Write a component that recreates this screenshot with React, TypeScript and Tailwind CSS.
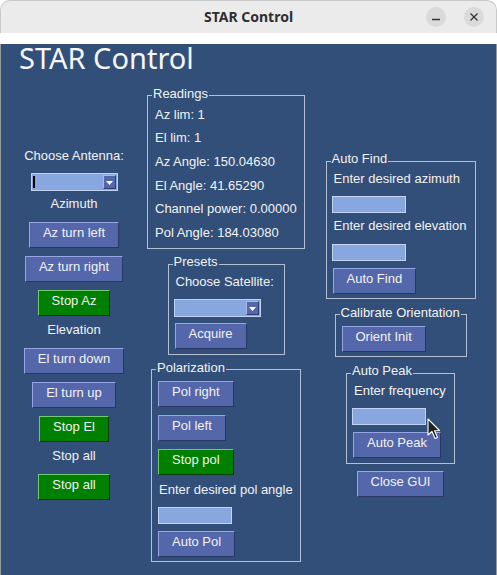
import React from 'react'

const txt = "text-[13px] leading-[16px] text-[#f2f2f2] font-['Liberation_Sans',Arial,sans-serif] whitespace-nowrap"

function Label({ children, className = '' }: { children: React.ReactNode; className?: string }) {
  return <div className={`h-[16px] ${txt} ${className}`}>{children}</div>
}

function Btn({ label, green, className = '' }: { label: string; green?: boolean; className?: string }) {
  const tone = green
    ? 'bg-[#008000] border-t-[#74c874] border-l-[#74c874] border-b-[#003a00] border-r-[#003a00]'
    : 'bg-[#5567ab] border-t-[#97a5e4] border-l-[#97a5e4] border-b-[#2a3664] border-r-[#2a3664]'
  return (
    <button className={`flex h-[26px] shrink-0 items-center border px-[13px] pb-[4px] ${tone} ${txt} ${className}`}>
      {label}
    </button>
  )
}

function Entry({ className = '' }: { className?: string }) {
  return <div className={`h-[17px] w-[74px] border border-[#c2d3f3] bg-[#88a7df] ${className}`} />
}

function Combo({ caret, className = '' }: { caret?: boolean; className?: string }) {
  return (
    <div className={`flex h-[18px] w-[87px] border border-[#bfd0f0] bg-[#88a7df] ${className}`}>
      <div className="flex flex-1">
        {caret && <div className="ml-[1px] mt-[2px] h-[12px] w-[2px] bg-black" />}
      </div>
      <div className="my-[1px] mr-[1px] flex w-[13px] items-center justify-center border border-t-[#aab6ea] border-l-[#aab6ea] border-b-[#2f3d70] border-r-[#2f3d70] bg-[#5567ab]">
        <svg width="7" height="4" viewBox="0 0 7 4" className="mt-[2px]">
          <path d="M0 0H7L3.5 4Z" fill="#ffffff" />
        </svg>
      </div>
    </div>
  )
}

function Group({ title, className = '', children }: { title: string; className?: string; children: React.ReactNode }) {
  return (
    <fieldset className={`shrink-0 border border-[#b4bfd1] ${className}`}>
      <legend className={`ml-[4px] px-[1px] pb-[4px] ${txt}`}>{title}</legend>
      {children}
    </fieldset>
  )
}

const readings = [
  'Az lim: 1',
  'El lim: 1',
  'Az Angle: 150.04630',
  'El Angle: 41.65290',
  'Channel power: 0.00000',
  'Pol Angle: 184.03080',
]

export default function App() {
  return (
    <div className="h-[575px] w-[497px] bg-white">
      {/* window title bar */}
      <div className="grid h-[33px] grid-cols-[1fr_auto_1fr] rounded-t-[10px] border-x border-t border-[#c9c9c9] bg-[#ebebeb]">
        <div />
        <div className="font-['Noto_Sans',sans-serif] text-[14px] font-bold leading-[31px] text-[#2f2f2f]">STAR Control</div>
        <div className="flex items-center justify-end gap-[18px] pr-[12px]">
          <div className="flex h-[20px] w-[20px] items-center justify-center rounded-full bg-[#dadada]">
            <svg width="20" height="20" viewBox="0 0 20 20">
              <path d="M6 12.5H14" stroke="#333" strokeWidth="1.5" />
            </svg>
          </div>
          <div className="flex h-[20px] w-[20px] items-center justify-center rounded-full bg-[#dadada]">
            <svg width="20" height="20" viewBox="0 0 20 20">
              <path d="M6.5 6.5L13.5 13.5M13.5 6.5L6.5 13.5" stroke="#333" strokeWidth="1.3" />
            </svg>
          </div>
        </div>
      </div>

      {/* app body */}
      <div className="relative h-[542px] border-x border-b border-[#9a9a9a] bg-[#324f7a]">
        <div className="ml-[18px] mt-[11px] h-[28px] font-['Noto_Sans',sans-serif] text-[29px] leading-[28px] text-[#f6f6f6]">
          STAR Control
        </div>

        <div className="flex">
          {/* antenna controls */}
          <div className="flex w-[146px] flex-col items-center">
            <Label className="mt-[76px]">Choose Antenna:</Label>
            <Combo caret className="mt-[9px]" />
            <Label className="mt-[5px]">Azimuth</Label>
            <Btn label="Az turn left" className="mt-[10px]" />
            <Btn label="Az turn right" className="mt-[8px]" />
            <Btn label="Stop Az" green className="mt-[8px]" />
            <Label className="mt-[6px]">Elevation</Label>
            <Btn label="El turn down" className="mt-[10px]" />
            <Btn label="El turn up" className="mt-[8px]" />
            <Btn label="Stop El" green className="mt-[8px]" />
            <Label className="mt-[6px]">Stop all</Label>
            <Btn label="Stop all" green className="mt-[10px]" />
          </div>

          {/* readings, presets, polarization */}
          <div className="flex w-[158px] flex-col items-center">
            <Group title="Readings" className="mt-[13.5px] w-[158px]">
              <div className="flex flex-col gap-[7.7px] pb-[7px] pl-[7px] pt-[1px]">
                {readings.map((r) => (
                  <Label key={r}>{r}</Label>
                ))}
              </div>
            </Group>

            <Group title="Presets" className="mt-[5.5px] w-[117px]">
              <div className="flex flex-col items-start pb-[5px] pl-[5px]">
                <Label className="ml-[2px]">Choose Satellite:</Label>
                <Combo className="mt-[9px]" />
                <Btn label="Acquire" className="ml-[1px] mt-[6px]" />
              </div>
            </Group>

            <Group title="Polarization" className="mt-[4.5px] w-[150px]">
              <div className="flex flex-col items-start pb-[4px] pl-[6px] pt-[1.5px]">
                <Btn label="Pol right" />
                <Btn label="Pol left" className="mt-[8px]" />
                <Btn label="Stop pol" green className="mt-[8px]" />
                <Label className="ml-[1px] mt-[7px]">Enter desired pol angle</Label>
                <Entry className="mt-[9px]" />
                <Btn label="Auto Pol" className="mt-[7px]" />
              </div>
            </Group>
          </div>

          {/* find / calibrate / peak */}
          <div className="flex flex-1 flex-col items-center">
            <Group title="Auto Find" className="mt-[79px] w-[150px]">
              <div className="flex flex-col items-start pb-[4px] pl-[5px]">
                <Label className="ml-[2px]">Enter desired azimuth</Label>
                <Entry className="mt-[9px]" />
                <Label className="ml-[2px] mt-[5px]">Enter desired elevation</Label>
                <Entry className="mt-[10px]" />
                <Btn label="Auto Find" className="ml-[1px] mt-[7px]" />
              </div>
            </Group>

            <Group title="Calibrate Orientation" className="mt-[5.5px] w-[132px]">
              <div className="flex flex-col items-start pb-[4px] pl-[6px] pt-[1.5px]">
                <Btn label="Orient Init" />
              </div>
            </Group>

            <Group title="Auto Peak" className="mt-[6px] w-[109px]">
              <div className="flex flex-col items-start pb-[5px] pl-[5px]">
                <Label className="ml-[2px]">Enter frequency</Label>
                <Entry className="mt-[9px]" />
                <Btn label="Auto Peak" className="ml-[1px] mt-[7px]" />
              </div>
            </Group>

            <Btn label="Close GUI" className="mt-[7px]" />
          </div>
        </div>

        {/* mouse pointer */}
        <svg width="14" height="22" viewBox="0 0 14 22" className="absolute left-[426px] top-[374px]">
          <path d="M1 1L1 17L5 13.5L8 20.5L10.5 19.5L7.6 12.8L12.5 12.5Z" fill="#222" stroke="#fff" strokeWidth="1.1" strokeLinejoin="round" />
        </svg>
      </div>
    </div>
  )
}
